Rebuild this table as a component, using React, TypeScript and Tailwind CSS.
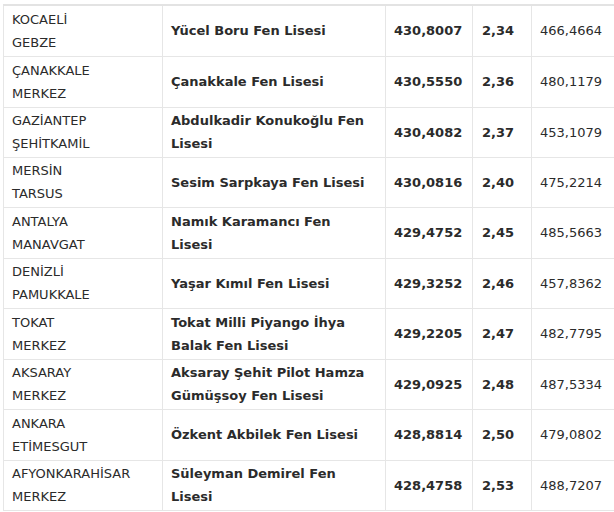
import React from 'react';

type Row = {
  city: string;
  district: string;
  school: string;
  score: string;
  pct: string;
  max: string;
};

const rows: Row[] = [
  { city: 'KOCAELİ', district: 'GEBZE', school: 'Yücel Boru Fen Lisesi', score: '430,8007', pct: '2,34', max: '466,4664' },
  { city: 'ÇANAKKALE', district: 'MERKEZ', school: 'Çanakkale Fen Lisesi', score: '430,5550', pct: '2,36', max: '480,1179' },
  { city: 'GAZİANTEP', district: 'ŞEHİTKAMİL', school: 'Abdulkadir Konukoğlu Fen Lisesi', score: '430,4082', pct: '2,37', max: '453,1079' },
  { city: 'MERSİN', district: 'TARSUS', school: 'Sesim Sarpkaya Fen Lisesi', score: '430,0816', pct: '2,40', max: '475,2214' },
  { city: 'ANTALYA', district: 'MANAVGAT', school: 'Namık Karamancı Fen Lisesi', score: '429,4752', pct: '2,45', max: '485,5663' },
  { city: 'DENİZLİ', district: 'PAMUKKALE', school: 'Yaşar Kımıl Fen Lisesi', score: '429,3252', pct: '2,46', max: '457,8362' },
  { city: 'TOKAT', district: 'MERKEZ', school: 'Tokat Milli Piyango İhya Balak Fen Lisesi', score: '429,2205', pct: '2,47', max: '482,7795' },
  { city: 'AKSARAY', district: 'MERKEZ', school: 'Aksaray Şehit Pilot Hamza Gümüşsoy Fen Lisesi', score: '429,0925', pct: '2,48', max: '487,5334' },
  { city: 'ANKARA', district: 'ETİMESGUT', school: 'Özkent Akbilek Fen Lisesi', score: '428,8814', pct: '2,50', max: '479,0802' },
  { city: 'AFYONKARAHİSAR', district: 'MERKEZ', school: 'Süleyman Demirel Fen Lisesi', score: '428,4758', pct: '2,53', max: '488,7207' },
];

// row heights measured off the screenshot (they alternate 50/51)
const tall = [true, true, false, false, true, false, true, false, true, false];

export default function App() {
  return (
    <div className="w-[614px] h-[512px] overflow-hidden bg-white pl-[3px] pt-[4px]" style={{ fontFamily: '"DejaVu Sans", Verdana, sans-serif' }}>
      <table className="w-[611px] table-fixed border-collapse border-t-2 border-t-[#e3e3e3] text-[13px] leading-[23px] text-[#2b2b2b]">
        <colgroup>
          <col className="w-[159px]" />
          <col className="w-[223px]" />
          <col className="w-[87px]" />
          <col className="w-[59px]" />
          <col className="w-[83px]" />
        </colgroup>
        <tbody>
          {rows.map((r, i) => (
            <tr key={r.city + r.district} className={tall[i] ? 'h-[51px]' : 'h-[50px]'}>
              <td className="border border-[#e6e6e6] px-[8px] py-0 align-middle">
                {r.city}
                <br />
                {r.district}
              </td>
              <td className="border border-[#e6e6e6] pl-[8px] pr-[14px] py-0 align-middle font-bold">{r.school}</td>
              <td className="border border-[#e6e6e6] px-[8px] py-0 align-middle font-bold">{r.score}</td>
              <td className="border border-[#e6e6e6] px-[9px] py-0 align-middle font-bold">{r.pct}</td>
              <td className="border border-[#e6e6e6] px-[8px] py-0 align-middle">{r.max}</td>
            </tr>
          ))}
        </tbody>
      </table>
    </div>
  );
}
